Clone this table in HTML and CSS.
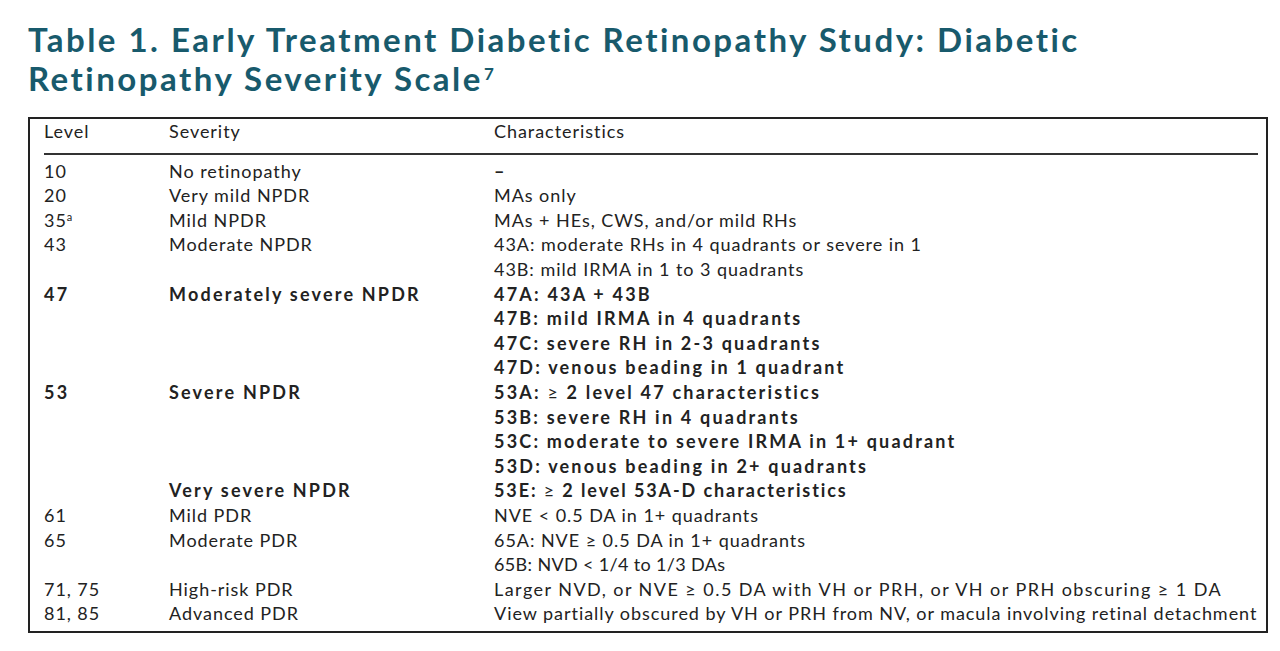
FILE: index.html
```html
<!DOCTYPE html>
<html lang="en">
<head>
<meta charset="utf-8">
<title>Diabetic Retinopathy Severity Scale</title>
<link rel="stylesheet" href="styles.css">
</head>
<body>
<main class="page">
  <h1 class="title">Table 1. Early Treatment Diabetic Retinopathy Study: Diabetic Retinopathy Severity Scale<sup class="ref">7</sup></h1>
  <div class="box">
    <table class="scale">
      <thead>
        <tr><th class="c-level">Level</th><th class="c-sev">Severity</th><th class="c-char">Characteristics</th></tr>
      </thead>
      <tbody>
        <tr class="first"><td>10</td><td>No retinopathy</td><td><span class="dash">–</span></td></tr>
        <tr><td>20</td><td>Very mild NPDR</td><td>MAs only</td></tr>
        <tr><td>35<sup class="note">a</sup></td><td>Mild NPDR</td><td>MAs + HEs, CWS, and/or mild RHs</td></tr>
        <tr><td>43</td><td>Moderate NPDR</td><td>43A: moderate RHs in 4 quadrants or severe in 1</td></tr>
        <tr><td></td><td></td><td>43B: mild IRMA in 1 to 3 quadrants</td></tr>
        <tr class="bold"><td>47</td><td>Moderately severe NPDR</td><td>47A: 43A + 43B</td></tr>
        <tr class="bold"><td></td><td></td><td>47B: mild IRMA in 4 quadrants</td></tr>
        <tr class="bold"><td></td><td></td><td>47C: severe RH in 2-3 quadrants</td></tr>
        <tr class="bold"><td></td><td></td><td>47D: venous beading in 1 quadrant</td></tr>
        <tr class="bold"><td>53</td><td>Severe NPDR</td><td>53A: <span class="ge">≥</span> 2 level 47 characteristics</td></tr>
        <tr class="bold"><td></td><td></td><td>53B: severe RH in 4 quadrants</td></tr>
        <tr class="bold"><td></td><td></td><td>53C: moderate to severe IRMA in 1+ quadrant</td></tr>
        <tr class="bold"><td></td><td></td><td>53D: venous beading in 2+ quadrants</td></tr>
        <tr class="bold"><td></td><td>Very severe NPDR</td><td class="tight">53E: <span class="ge">≥</span> 2 level 53A-D characteristics</td></tr>
        <tr><td>61</td><td>Mild PDR</td><td>NVE &lt; 0.5 DA in 1+ quadrants</td></tr>
        <tr><td>65</td><td>Moderate PDR</td><td>65A: NVE ≥ 0.5 DA in 1+ quadrants</td></tr>
        <tr><td></td><td></td><td class="tight">65B: NVD &lt; 1/4 to 1/3 DAs</td></tr>
        <tr><td>71, 75</td><td>High-risk PDR</td><td class="wide">Larger NVD, or NVE ≥ 0.5 DA with VH or PRH, or VH or PRH obscuring ≥ 1 DA</td></tr>
        <tr class="last"><td>81, 85</td><td>Advanced PDR</td><td>View partially obscured by VH or PRH from NV, or macula involving retinal detachment</td></tr>
      </tbody>
    </table>
  </div>
</main>
</body>
</html>
```

FILE: styles.css
```css
html, body {
  margin: 0;
  padding: 0;
  background: #ffffff;
}

.page {
  width: 1240px;
  padding: 20px 0 0 28px;
}

.title {
  margin: 0 0 19px 0;
  max-width: 1120px;
  font-family: Lato, "Liberation Sans", sans-serif;
  font-weight: 700;
  font-size: 33px;
  line-height: 39px;
  letter-spacing: 2.5px;
  color: #185a6c;
}

.title .ref {
  font-size: 17px;
  line-height: 0;
  vertical-align: 11px;
  letter-spacing: 0;
  margin-left: 1px;
}

.box {
  border: 2px solid #222;
  padding: 0 8px 5px 14px;
}

.scale {
  width: 100%;
  border-collapse: collapse;
  font-family: Lato, "Liberation Sans", sans-serif;
  font-size: 18px;
  line-height: 24.6px;
  letter-spacing: 0.95px;
  color: #222;
}

.scale th,
.scale td {
  padding: 0;
  text-align: left;
  vertical-align: top;
  white-space: nowrap;
  font-weight: 400;
}

.scale thead th {
  padding: 0 0 9px 0;
  border-bottom: 2px solid #333;
}

.scale tbody tr.first td {
  padding-top: 4px;
}

.c-level { width: 125px; }
.c-sev { width: 325px; }

.scale tr.bold td {
  font-weight: 700;
  letter-spacing: 2.2px;
}

.scale tr.bold td.tight {
  letter-spacing: 1.9px;
}

.scale td.tight {
  letter-spacing: 0.35px;
}

.scale td.wide {
  letter-spacing: 1.45px;
}

.scale .ge {
  font-weight: 400;
}

.dash {
  font-weight: 700;
}

.note {
  font-size: 11px;
  line-height: 0;
  vertical-align: 6px;
  letter-spacing: 0;
}
```
